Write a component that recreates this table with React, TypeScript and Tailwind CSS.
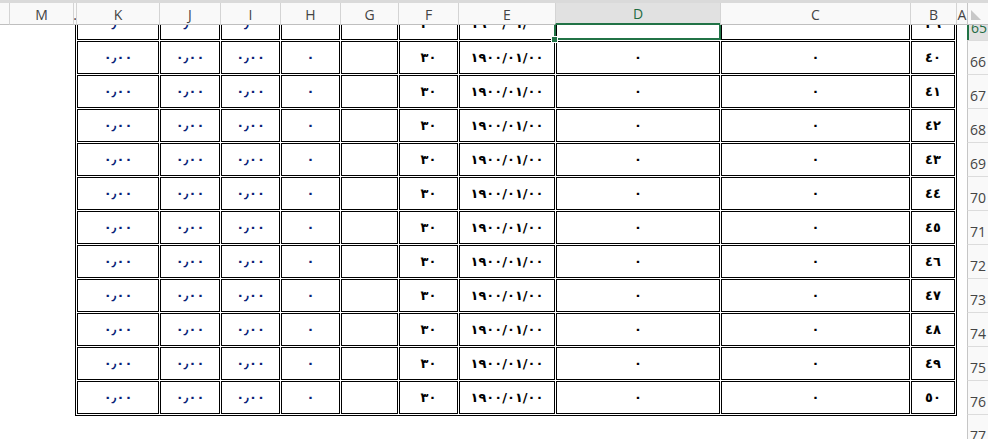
import React from "react";

const GREEN = "#217346";

// header columns (RTL sheet shown mirrored: N M L K ... B A)
const headerCols: { label: string; w: number }[] = [
  { label: "", w: 9 },
  { label: "M", w: 64 },
  { label: ".", w: 3 },
  { label: "K", w: 83 },
  { label: "J", w: 61 },
  { label: "I", w: 60 },
  { label: "H", w: 60 },
  { label: "G", w: 58 },
  { label: "F", w: 60 },
  { label: "E", w: 97 },
  { label: "D", w: 165 },
  { label: "C", w: 190 },
  { label: "B", w: 46 },
  { label: "A", w: 11 },
];

type Kind = "dec" | "zeroNavy" | "empty" | "thirty" | "date" | "zero" | "index";

const dataCols: { w: number; kind: Kind }[] = [
  { w: 83, kind: "dec" },
  { w: 61, kind: "dec" },
  { w: 60, kind: "dec" },
  { w: 60, kind: "zeroNavy" },
  { w: 58, kind: "empty" },
  { w: 60, kind: "thirty" },
  { w: 97, kind: "date" },
  { w: 165, kind: "zero" },
  { w: 190, kind: "zero" },
  { w: 45, kind: "index" },
];

const rows = [65, 66, 67, 68, 69, 70, 71, 72, 73, 74, 75, 76];
const headerRows = [...rows, 77, 78];

const ar = (n: number | string) =>
  String(n).replace(/\d/g, (d) => "٠١٢٣٤٥٦٧٨٩"[Number(d)]);

const cellText = (kind: Kind, row: number) => {
  switch (kind) {
    case "dec":
      return "٠٫٠٠";
    case "zeroNavy":
    case "zero":
      return "٠";
    case "thirty":
      return "٣٠";
    case "date":
      return "١٩٠٠/٠١/٠٠";
    case "index":
      return ar(row - 26);
    default:
      return "";
  }
};

const Cell: React.FC<{ w: number; kind: Kind; row: number }> = ({ w, kind, row }) => {
  const navy = kind === "dec" || kind === "zeroNavy";
  return (
    <div className="shrink-0 pl-[1px] pt-[1px] h-[34px]" style={{ width: w }}>
      <div
        dir="ltr"
        className={
          "h-full border border-black flex items-center justify-center text-[13px] font-bold font-['DejaVu_Sans',sans-serif] " +
          (navy ? "text-[#0a1f78]" : "text-black")
        }
      >
        {cellText(kind, row)}
      </div>
    </div>
  );
};

export default function App() {
  return (
    <div className="w-[988px] h-[439px] overflow-hidden bg-white font-['Open_Sans','Liberation_Sans',sans-serif]">
      {/* column header */}
      <div className="h-[3px] bg-[#dadada]" />
      <div className="flex h-[22px]">
        {headerCols.map((c, i) => (
          <div
            key={i}
            style={{ width: c.w }}
            className={
              "shrink-0 flex items-center justify-center overflow-hidden text-[14px] leading-none pt-[2px] " +
              (i > 0 ? "border-l border-[#d4d4d4] " : "") +
              (c.label === "D"
                ? "bg-[#e1e1e1] text-[#1e6b41] border-b-2 border-b-[#217346]"
                : "bg-[#f9f9f9] text-[#444] border-b border-b-[#bfbfbf]")
            }
          >
            {c.label}
          </div>
        ))}
        <div className="w-[30px] shrink-0 bg-[#f9f9f9] border-l border-[#c6c6c6] border-b border-b-[#bfbfbf] flex items-center pl-[3px] pt-[3px]">
          <svg width="10" height="10" viewBox="0 0 10 10">
            <polygon points="0,0 0,10 10,10" fill="#c8c8c8" />
          </svg>
        </div>
      </div>

      {/* body */}
      <div className="relative flex h-[414px] overflow-hidden">
        <div className="w-[75px] shrink-0" />

        {/* table */}
        <div className="shrink-0 self-start mt-[-19px] border-l border-r border-b border-black pr-[1px] pb-[1px]">
          {rows.map((r) => (
            <div key={r} className="flex">
              {dataCols.map((c, i) => (
                <Cell key={i} w={c.w} kind={c.kind} row={r} />
              ))}
            </div>
          ))}
        </div>

        <div className="w-[10px] shrink-0" />

        {/* row header */}
        <div className="w-[30px] shrink-0 self-start mt-[-19px] flex flex-col">
          {headerRows.map((r, i) => (
            <div
              key={r}
              className={
                "h-[34px] shrink-0 flex items-end pl-[2px] pb-[5px] text-[14px] leading-none " +
                (i > 0 ? "border-t border-[#dcdcdc] " : "") +
                (r === 65
                  ? "bg-[#e1e1e1] text-[#1e6b41] border-l-2 border-l-[#217346]"
                  : "bg-[#f9f9f9] text-[#444] border-l border-l-[#c6c6c6]")
              }
            >
              {r}
            </div>
          ))}
        </div>

        {/* selected cell D65 */}
        <div
          className="absolute left-[554px] top-[-2px] w-[167px] h-[17px] border-2 border-t-0"
          style={{ borderColor: GREEN }}
        />
        <div className="absolute left-[551px] top-[11px] w-[7px] h-[7px] border border-white bg-[#217346]" />
      </div>
    </div>
  );
}
